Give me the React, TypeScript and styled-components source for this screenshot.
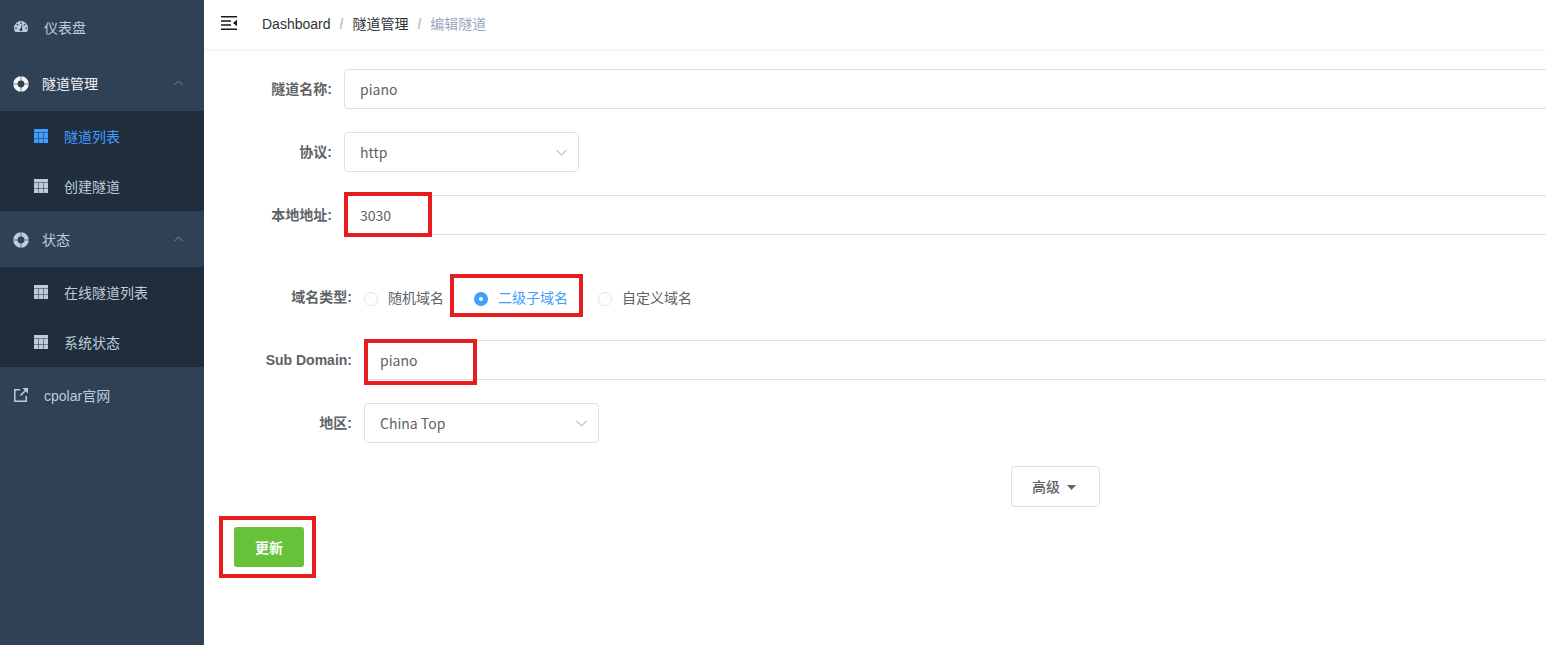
import React, { useState } from 'react';
import styled, { createGlobalStyle, css } from 'styled-components';

const GlobalStyle = createGlobalStyle`
  *, *::before, *::after { box-sizing: border-box; }
  body {
    margin: 0;
    background: #fff;
    color: #606266;
    font-family: "Liberation Sans", "Noto Sans CJK SC", sans-serif;
    font-size: 14px;
  }
  button, input, select { font: inherit; color: inherit; }
  svg { display: block; flex: none; }
`;

const Layout = styled.div`
  display: flex;
  min-height: 100vh;
`;

/* ---------- Sidebar ---------- */

const Sidebar = styled.nav`
  flex: none;
  width: 204px;
  background: #304156;
  color: #bfcbd9;
`;

const itemBase = css`
  display: flex;
  align-items: center;
  width: 100%;
  height: 56px;
  color: inherit;
  text-decoration: none;
`;

const MenuLink = styled.a<{ $first?: boolean }>`
  ${itemBase}
  height: ${p => (p.$first ? 54 : 56)}px;
  gap: 16px;
  padding: 0 14px;
`;

const GroupButton = styled.button<{ $current?: boolean }>`
  ${itemBase}
  height: ${p => (p.$current ? 57 : 56)}px;
  gap: 13px;
  padding: 0 21px 0 13px;
  border: 0;
  background: none;
  cursor: pointer;
  color: ${p => (p.$current ? '#f4f4f5' : '#bfcbd9')};
`;

const GroupTitle = styled.span`
  flex: 1;
  text-align: left;
`;

const SubMenu = styled.div`
  background: #1f2d3d;
`;

const SubLink = styled.a<{ $active?: boolean }>`
  ${itemBase}
  height: 50px;
  gap: 16px;
  padding: 0 34px;
  color: ${p => (p.$active ? '#409eff' : '#bfcbd9')};
`;

/* ---------- Header ---------- */

const Main = styled.main`
  flex: 1;
  min-width: 0;
  overflow: hidden;
`;

const Header = styled.header`
  display: flex;
  align-items: center;
  gap: 25px;
  height: 49px;
  padding: 0 17px 2px;
  box-shadow: 0 1px 4px rgba(0, 21, 41, 0.08);
`;

const ToggleButton = styled.button`
  padding: 0 0 2px;
  border: 0;
  background: none;
  color: #1a1a1a;
  cursor: pointer;
`;

const Breadcrumb = styled.ol`
  display: flex;
  align-items: baseline;
  margin: 0;
  padding: 0;
  line-height: 20px;
  list-style: none;
`;

const Crumb = styled.li`
  color: #97a8be;

  & + &::before {
    content: '/';
    margin: 0 9px;
    color: #c0c4cc;
    font-weight: 700;
  }

  a {
    color: #303133;
    text-decoration: none;
  }
`;

/* ---------- Form ---------- */

/* The form is wider than the visible area; what runs over is clipped by Main. */
const Form = styled.form`
  margin: 20px -331px 0 30px;
`;

const Section = styled.div<{ $nested?: boolean }>`
  display: flex;
  flex-direction: column;
  gap: 23px;
  margin-left: ${p => (p.$nested ? 20 : 0)}px;
  margin-top: ${p => (p.$nested ? 42 : 0)}px;
`;

const Row = styled.div`
  display: flex;
  min-height: 40px;
`;

const labelStyle = css`
  flex: none;
  width: 110px;
  padding-right: 12px;
  text-align: right;
  line-height: 40px;
  font-weight: 700;
`;

const Label = styled.label`
  ${labelStyle}
`;

const GroupLabel = styled.span`
  ${labelStyle}
`;

const Field = styled.div<{ $narrow?: boolean }>`
  position: relative;
  ${p => (p.$narrow ? 'width: 235px;' : 'flex: 1;')}
`;

const control = css`
  display: block;
  width: 100%;
  height: 40px;
  padding: 0 15px;
  border: 1px solid #dcdfe6;
  border-radius: 4px;
  background: #fff;
  font-family: "Noto Sans CJK SC", "Noto Sans", sans-serif;
  outline: none;
`;

const TextInput = styled.input`
  ${control}
`;

const Select = styled.select`
  ${control}
  appearance: none;
`;

const SelectArrow = styled.span`
  position: absolute;
  top: 17px;
  right: 12px;
  color: #c0c4cc;
  pointer-events: none;
`;

const RadioGroup = styled.div`
  display: flex;
  align-items: center;
  gap: 30px;
`;

const RadioLabel = styled.label<{ $checked: boolean }>`
  position: relative;
  display: flex;
  align-items: center;
  gap: 10px;
  color: ${p => (p.$checked ? '#409eff' : '#606266')};
  cursor: pointer;
`;

const Radio = styled.input`
  appearance: none;
  width: 14px;
  height: 14px;
  margin: 3px 0 0;
  border: 1px solid #dcdfe6;
  border-radius: 50%;
  background: #fff;

  &:checked {
    border: 5px solid #409eff;
  }
`;

/* Red frame that points out a value the reader has to set. */
const Highlight = styled.span<{ $top: number; $left: number; $width: number; $height: number }>`
  position: absolute;
  top: ${p => p.$top}px;
  left: ${p => p.$left}px;
  width: ${p => p.$width}px;
  height: ${p => p.$height}px;
  border: 4px solid #e81c1c;
  pointer-events: none;
`;

const Center = styled.div`
  display: flex;
  justify-content: center;
  margin: 23px 0 20px;
`;

const AdvancedButton = styled.button`
  display: flex;
  align-items: center;
  gap: 7px;
  height: 41px;
  padding: 0 23px 0 20px;
  border: 1px solid #dcdfe6;
  border-radius: 4px;
  background: #fff;
  font-weight: 500;
  line-height: 20px;
  cursor: pointer;
`;

const SubmitWrap = styled.div`
  position: relative;
  width: fit-content;
`;

const SubmitButton = styled.button`
  display: block;
  height: 40px;
  padding: 0 21px;
  border: 0;
  border-radius: 3px;
  background: #67c23a;
  color: #fff;
  font-weight: 700;
  cursor: pointer;
`;

/* ---------- Icons ---------- */

const GaugeIcon = () => (
  <svg width="14" height="14" viewBox="0 0 128 128" aria-hidden="true">
    <path
      fill="currentColor"
      d="M64 10a64 64 0 0 0-64 64c0 12.400 3.400 23.900 10.100 34.500.8 1.200 1.900 1.800 3.500 1.800h100.800c1.600 0 2.700-.6 3.500-1.800A63 63 0 0 0 128 74a64 64 0 0 0-64-64z"
    />
    <g fill="#304156">
      <circle cx="18" cy="74" r="8" />
      <circle cx="32" cy="42" r="8" />
      <circle cx="64" cy="28" r="8" />
      <circle cx="96" cy="42" r="8" />
      <circle cx="110" cy="74" r="8" />
      <circle cx="64" cy="89" r="13" />
    </g>
    <path d="M65 84l9-36" stroke="#304156" strokeWidth="9" strokeLinecap="round" />
  </svg>
);

const BuoyIcon = () => (
  <svg width="16" height="18" viewBox="0 -2 16 18" aria-hidden="true">
    <circle cx="8" cy="8" r="5.600" fill="none" stroke="currentColor" strokeWidth="4.400" />
    <path d="M8 0v5M8 11v5M0 8h5M11 8h5" stroke="#304156" strokeWidth="0.600" />
  </svg>
);

const GridIcon = () => (
  <svg width="14" height="14" viewBox="0 0 14 14" aria-hidden="true">
    <path fill="currentColor" d="M0 0h14v14H0z" />
    <path
      fill="none"
      stroke="#1f2d3d"
      strokeWidth="0.500"
      d="M0 3.500h14M0 9.500h14M4.500 3.500V14M9.500 3.500V14"
    />
  </svg>
);

const ExternalIcon = () => (
  <svg width="14" height="14" viewBox="0 0 14 14" aria-hidden="true">
    <path d="M6 1.800H.8v11.400h11.400V8" fill="none" stroke="currentColor" strokeWidth="1.500" />
    <path d="M6.500 7.500l5-5" stroke="currentColor" strokeWidth="1.600" />
    <path d="M8.500 0H14v5.500z" fill="currentColor" />
  </svg>
);

const FoldIcon = () => (
  <svg width="16" height="14" viewBox="0 0 16 14" aria-hidden="true">
    <path d="M0 .8h16M0 5h10M0 9h10M0 13.200h16" stroke="currentColor" strokeWidth="1.500" />
    <path d="M16 3.800v6.400L12 7z" fill="currentColor" />
  </svg>
);

const ChevronUp = () => (
  <svg width="9" height="6" viewBox="0 0 9 6" aria-hidden="true">
    <path d="M.5 5l4-4 4 4" fill="none" stroke="#7f8894" />
  </svg>
);

const ChevronDown = () => (
  <svg width="11" height="7" viewBox="0 0 11 7" aria-hidden="true">
    <path d="M.5 1l5 5 5-5" fill="none" stroke="currentColor" strokeWidth="1.200" />
  </svg>
);

const CaretDown = () => (
  <svg width="9" height="7" viewBox="0 -2 9 7" aria-hidden="true">
    <path d="M0 0h9L4.500 5z" fill="currentColor" />
  </svg>
);

/* ---------- Page ---------- */

const groups = [
  { title: '隧道管理', items: ['隧道列表', '创建隧道'] },
  { title: '状态', items: ['在线隧道列表', '系统状态'] },
];

const domainTypes = ['随机域名', '二级子域名', '自定义域名'];

export default function App() {
  const [domainType, setDomainType] = useState('二级子域名');

  return (
    <Layout>
      <GlobalStyle />
      <Sidebar>
        <MenuLink href="#dashboard" $first>
          <GaugeIcon />
          仪表盘
        </MenuLink>
        {groups.map((group, g) => (
          <React.Fragment key={group.title}>
            <GroupButton type="button" aria-expanded="true" $current={g === 0}>
              <BuoyIcon />
              <GroupTitle>{group.title}</GroupTitle>
              <ChevronUp />
            </GroupButton>
            <SubMenu>
              {group.items.map((item, i) => (
                <SubLink key={item} href={`#${g}-${i}`} $active={item === '隧道列表'}>
                  <GridIcon />
                  {item}
                </SubLink>
              ))}
            </SubMenu>
          </React.Fragment>
        ))}
        <MenuLink href="#cpolar">
          <ExternalIcon />
          cpolar官网
        </MenuLink>
      </Sidebar>

      <Main>
        <Header>
          <ToggleButton type="button" aria-label="折叠菜单">
            <FoldIcon />
          </ToggleButton>
          <Breadcrumb>
            <Crumb><a href="#dashboard">Dashboard</a></Crumb>
            <Crumb><a href="#tunnels">隧道管理</a></Crumb>
            <Crumb>编辑隧道</Crumb>
          </Breadcrumb>
        </Header>

        <Form onSubmit={e => e.preventDefault()}>
          <Section>
            <Row>
              <Label htmlFor="name">隧道名称:</Label>
              <Field><TextInput id="name" defaultValue="piano" /></Field>
            </Row>
            <Row>
              <Label htmlFor="protocol">协议:</Label>
              <Field $narrow>
                <Select id="protocol" defaultValue="http">
                  <option>http</option>
                </Select>
                <SelectArrow><ChevronDown /></SelectArrow>
              </Field>
            </Row>
            <Row>
              <Label htmlFor="address">本地地址:</Label>
              <Field>
                <TextInput id="address" defaultValue="3030" />
                <Highlight $top={-3} $left={0} $width={88} $height={45} />
              </Field>
            </Row>
          </Section>

          <Section $nested>
            <Row role="radiogroup" aria-labelledby="domain-type">
              <GroupLabel id="domain-type">域名类型:</GroupLabel>
              <RadioGroup>
                {domainTypes.map(type => (
                  <RadioLabel key={type} $checked={type === domainType}>
                    <Radio
                      type="radio"
                      name="domain-type"
                      checked={type === domainType}
                      onChange={() => setDomainType(type)}
                    />
                    {type}
                    {type === '二级子域名' && (
                      <Highlight $top={-13} $left={-24} $width={133} $height={43} />
                    )}
                  </RadioLabel>
                ))}
              </RadioGroup>
            </Row>
            <Row>
              <Label htmlFor="subdomain">Sub Domain:</Label>
              <Field>
                <TextInput id="subdomain" defaultValue="piano" />
                <Highlight $top={-1} $left={0} $width={113} $height={46} />
              </Field>
            </Row>
            <Row>
              <Label htmlFor="region">地区:</Label>
              <Field $narrow>
                <Select id="region" defaultValue="China Top">
                  <option>China Top</option>
                </Select>
                <SelectArrow><ChevronDown /></SelectArrow>
              </Field>
            </Row>
          </Section>

          <Center>
            <AdvancedButton type="button">
              高级
              <CaretDown />
            </AdvancedButton>
          </Center>

          <SubmitWrap>
            <SubmitButton type="submit">更新</SubmitButton>
            <Highlight $top={-11} $left={-15} $width={97} $height={62} />
          </SubmitWrap>
        </Form>
      </Main>
    </Layout>
  );
}
